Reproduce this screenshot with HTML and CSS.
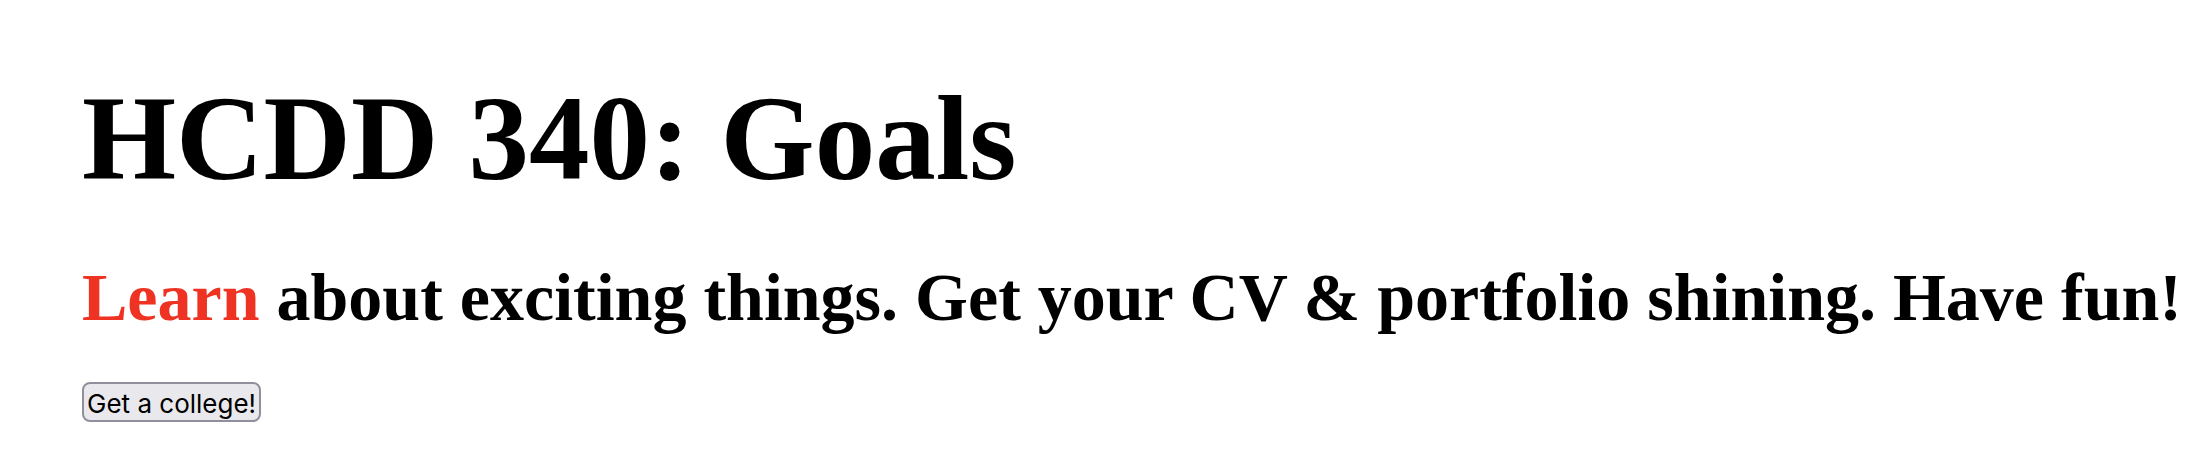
FILE: index.html
```
<!DOCTYPE html>
<html lang="en">
<head>
<meta charset="utf-8">
<title>HCDD 340: Goals</title>
<link rel="stylesheet" href="styles.css">
</head>
<body>
<main class="page">
<h1 class="title">HCDD 340: Goals</h1>
<h2 class="tagline"><span class="highlight">Learn</span> about exciting things. Get your CV &amp; portfolio shining. Have fun!</h2>
<button class="action" type="button">Get a college!</button>
</main>
</body>
</html>
```
FILE: styles.css
```
body {
  margin: 0;
  background: #fff;
  color: #000;
  font-family: "Liberation Serif", "Times New Roman", serif;
}

.page {
  padding: 64px 0 48px 82px;
}

.title {
  margin: 0 0 46px;
  font-size: 121px;
  line-height: 148px;
}

.tagline {
  margin: 0 0 46px;
  font-size: 68px;
  line-height: 78px;
}

.highlight {
  color: #ee3323;
}

.action {
  display: block;
  padding: 6px 3px 2px;
  border: 2px solid #8f8f9d;
  border-radius: 8px;
  background: #e9e9ed;
  color: #000;
  font-family: Inter, sans-serif;
  font-size: 26px;
  line-height: 28px;
}
```
